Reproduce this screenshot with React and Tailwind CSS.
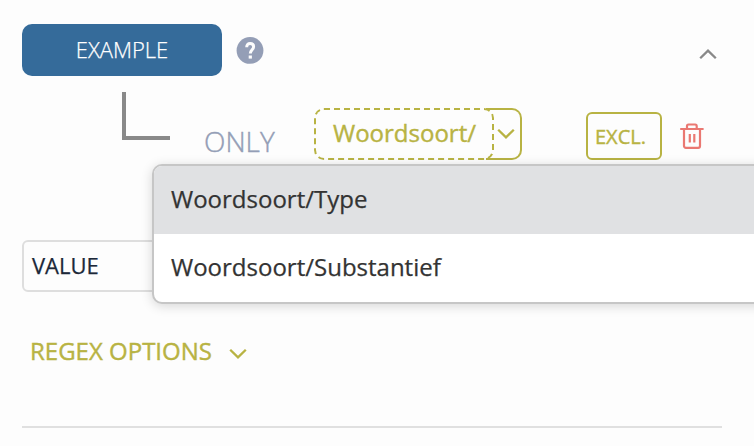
import React from "react";

function Chevron({ up = false, className = "" }) {
  return (
    <svg viewBox="0 0 18 12" className={`h-3 w-[18px] shrink-0 ${className}`} fill="none" stroke="currentColor">
      <path d={up ? "M1.2 10.3 9 2.6 16.8 10.3" : "M1.2 1.7 9 9.4 16.8 1.7"} strokeWidth="2.3" />
    </svg>
  );
}

function HelpIcon() {
  return (
    <svg viewBox="0 0 28 28" className="ml-[14px] size-[28px] text-[#949eb6]" fill="none">
      <circle cx="14" cy="14.4" r="13.4" fill="currentColor" />
      <path d="M10.7 11.3C10.7 8.7 11.9 7.6 14.1 7.6c2.2 0 3.5 1.1 3.5 3.1 0 3-3.3 3.2-3.3 6.9" stroke="#fdfdfd" strokeWidth="3" />
      <rect x="12.7" y="19.5" width="3.2" height="3.1" fill="#fdfdfd" />
    </svg>
  );
}

function TrashIcon() {
  return (
    <svg viewBox="0 0 24 28" className="ml-[18px] mt-[9px] h-7 w-6 text-[#ea7872]" fill="none" stroke="currentColor" strokeWidth="2.2">
      <path d="M.2 8H23.600M4 8v17a1.800 1.800 0 0 0 1.800 1.800h12.400a1.800 1.800 0 0 0 1.800-1.800V8M7 8V5a1.500 1.500 0 0 1 1.500-1.500h6.700a1.500 1.500 0 0 1 1.500 1.500V8M9.800 13v8.600M14.300 13v8.600" />
    </svg>
  );
}

export default function App() {
  return (
    <div className="relative h-[446px] w-[754px] overflow-hidden bg-[#fdfdfd] pl-[22px] pr-8 pt-6 font-['Open_Sans','Noto_Sans',sans-serif] whitespace-nowrap [-webkit-text-stroke:0.25px_currentColor]">
      <div className="flex h-[52px] items-center">
        <button className="h-[52px] w-[200px] rounded-[10px] bg-[#356b9a] pb-0.5 text-[22px] font-light leading-[50px] text-white">
          EXAMPLE
        </button>
        <HelpIcon />
        <Chevron up className="ml-auto mr-[5px] mt-2 text-[#898989]" />
      </div>

      <div className="mt-4 flex h-[68px]">
        <div className="ml-[100px] h-12 w-12 border-b-4 border-l-4 border-[#898989]" />
        <span className="ml-[34px] mt-[28px] w-[110px] text-[28px] font-light leading-[42px] text-[#949eb6] [-webkit-text-stroke:0.4px_currentColor]">ONLY</span>
        <div className="mt-4 flex h-[52px] text-[#b8b343]">
          <div className="w-[180px] rounded-[10px] border-2 border-dashed border-[#b8b343] pl-[17px] text-[24px] leading-[46px] [-webkit-text-stroke:0.4px_currentColor]">
            Woordsoort/
          </div>
          <button className="-ml-2 flex w-9 items-center rounded-r-[10px] border-y-2 border-r-2 border-[#b8b343] pl-[11px]">
            <Chevron />
          </button>
        </div>
        <button className="ml-16 mt-5 h-12 w-[76px] rounded-md border-2 border-[#b8b343] pl-[7px] text-left text-[20px] leading-[46px] text-[#b8b343] [-webkit-text-stroke:0.4px_currentColor]">
          EXCL.
        </button>
        <div className="mt-5">
          <TrashIcon />
        </div>
      </div>

      <div className="mt-20 h-[52px] w-[300px] rounded-md border-2 border-[#dedede] pl-2 text-[22px] leading-[46px] text-[#1c2839]">
        VALUE
      </div>

      <button className="ml-2 mt-[39px] flex h-10 items-center text-[24px] leading-10 text-[#b8b343] [-webkit-text-stroke:0.4px_currentColor]">
        REGEX OPTIONS
        <Chevron className="ml-[17px] mt-[5px]" />
      </button>

      <div className="mt-[55px] h-0.5 bg-[#e0e0e0]" />

      <div className="absolute left-[152px] top-[164px] h-[140px] w-[640px] overflow-hidden rounded-[10px] border-2 border-[#c6c6c6] bg-white text-[24px] text-[#333] shadow-[0_2px_12px_rgba(0,0,0,0.16)]">
        <div className="h-[68px] bg-[#e0e1e3] pl-[17px] leading-[66px]">Woordsoort/Type</div>
        <div className="h-[68px] pl-[17px] leading-[66px]">Woordsoort/Substantief</div>
      </div>
    </div>
  );
}
